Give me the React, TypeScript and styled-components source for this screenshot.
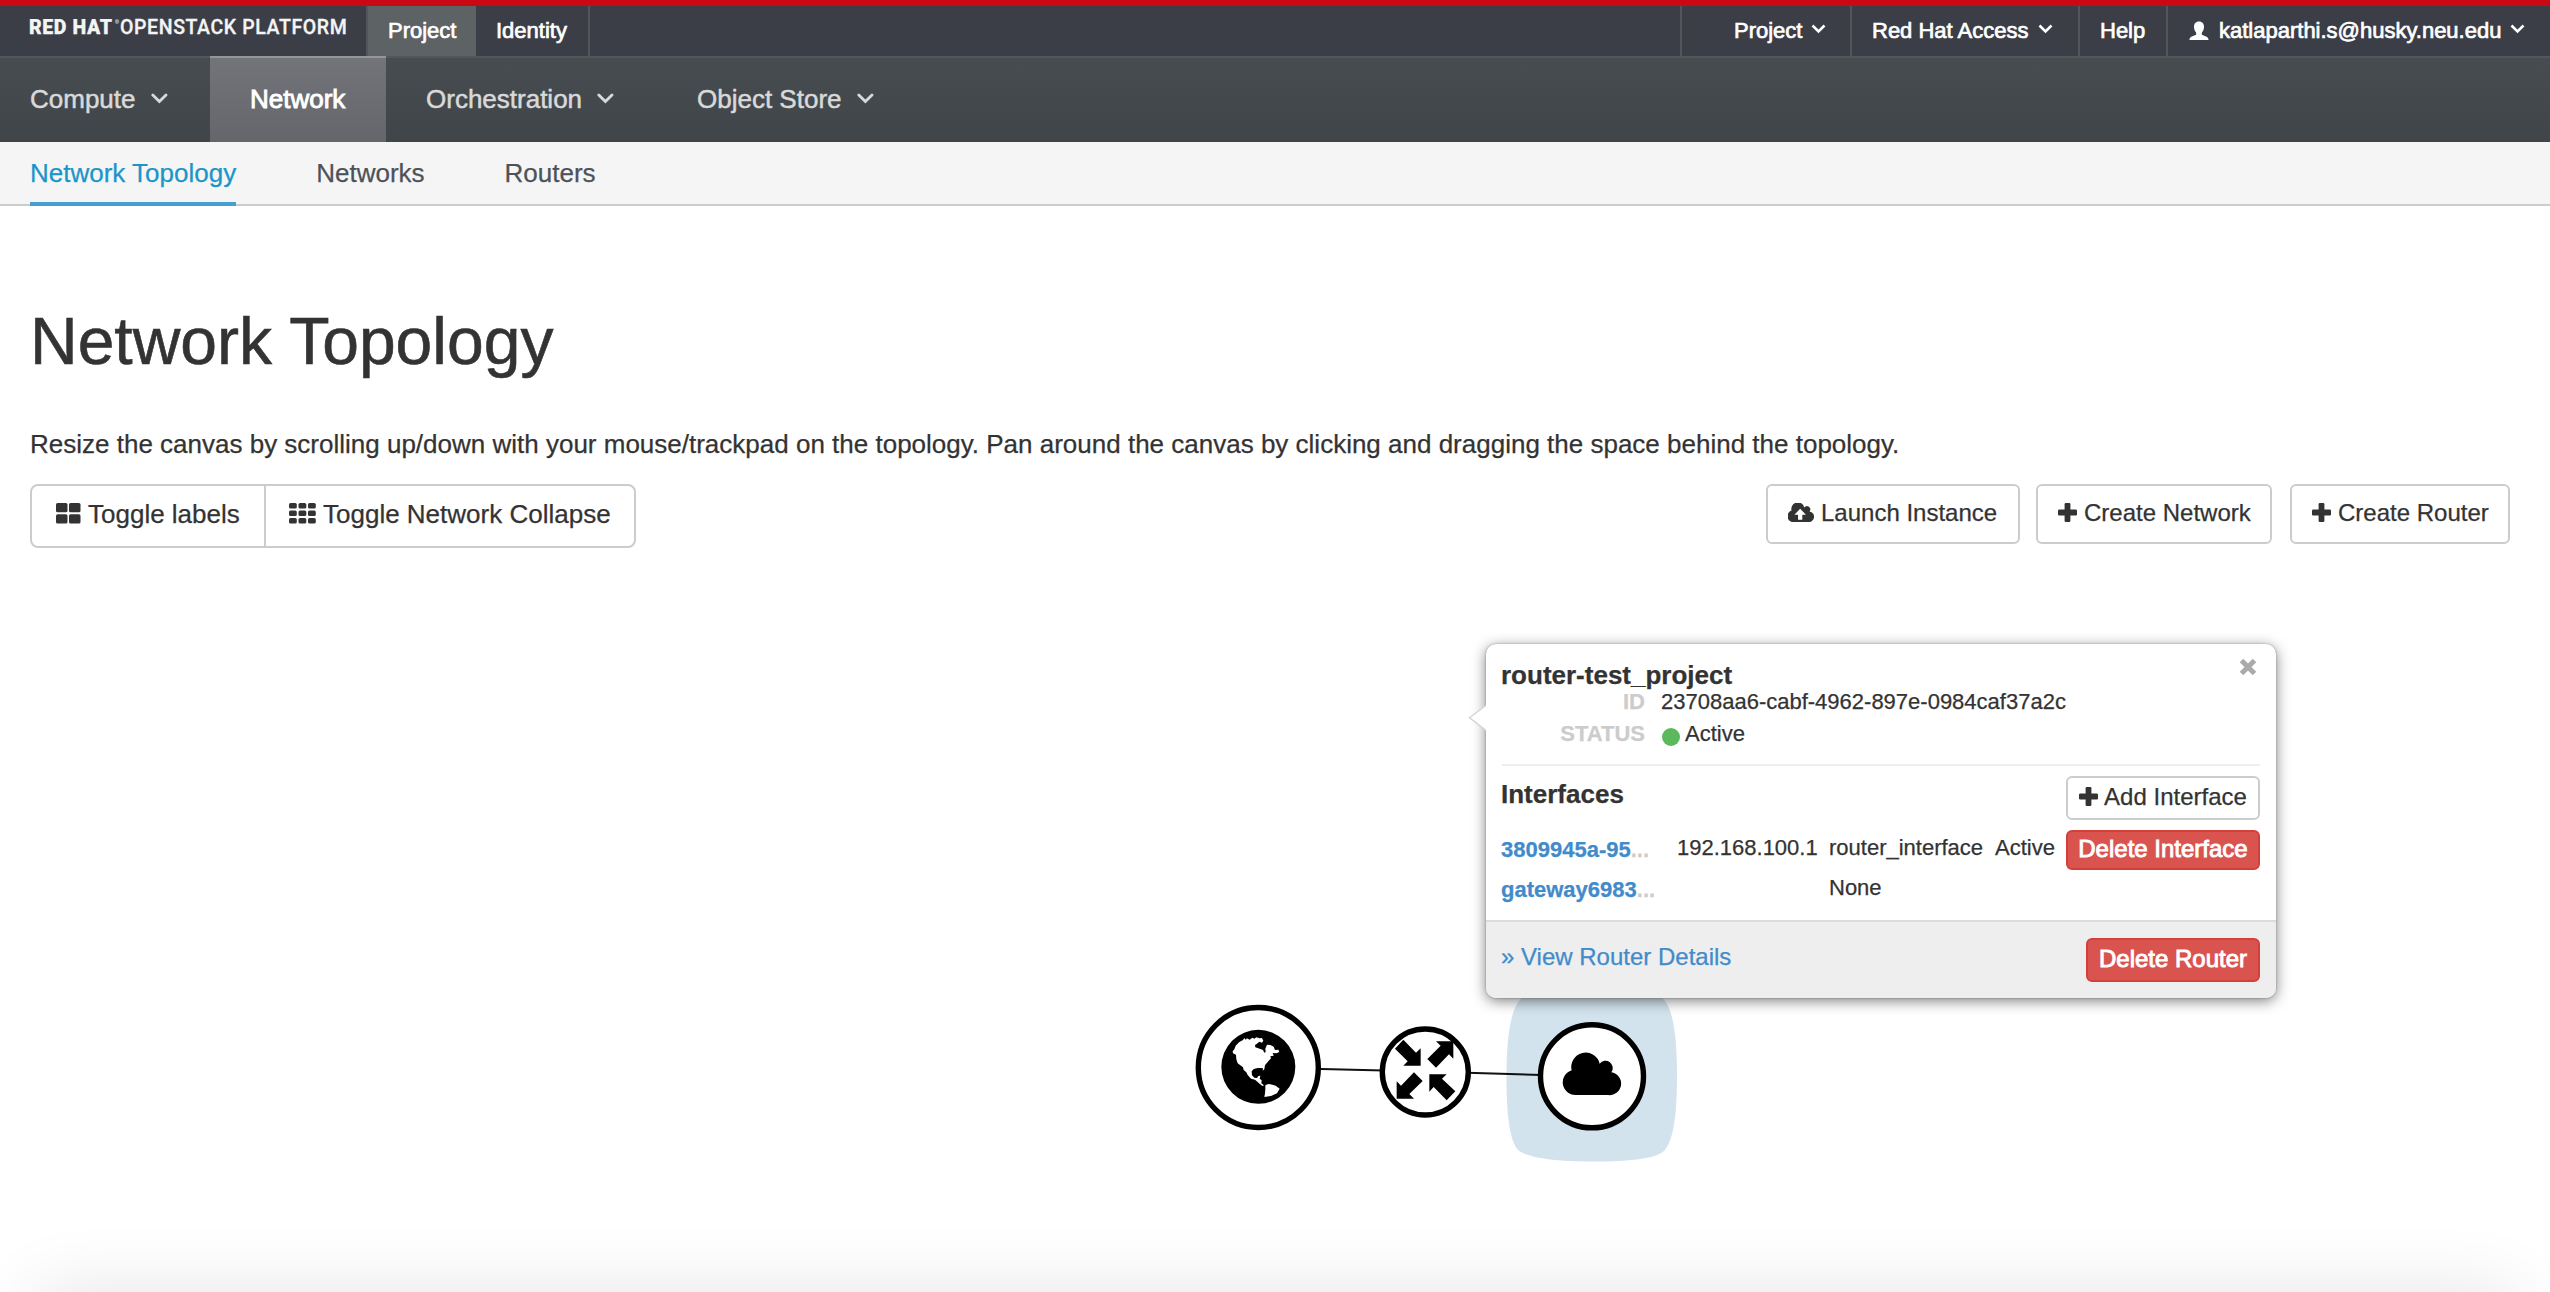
import React from "react";
import styled, { createGlobalStyle, css } from "styled-components";

const GlobalStyle = createGlobalStyle`
  *, *::before, *::after { box-sizing: border-box; }
  body {
    margin: 0;
    background: #fff;
    color: #333;
    font-family: "Liberation Sans", Arial, Helvetica, sans-serif;
    -webkit-text-stroke: 0.25px currentColor;
    overflow: hidden;
  }
`;

const Page = styled.div`
  position: relative;
  display: flex;
  flex-direction: column;
  height: 1292px;
  overflow: hidden;
`;

/* ---------- top bar ---------- */

const TopBar = styled.header`
  display: flex;
  flex: none;
  height: 56px;
  border-top: 6px solid #c90813;
  background: #3b3e46;
`;

const Brand = styled.div`
  display: flex;
  width: 366px;
  padding-left: 29px;
  color: #f4f4f4;
  font-family: Roboto, "Liberation Sans", sans-serif;
  font-size: 19.5px;
  line-height: 43px;
  white-space: nowrap;
`;

const BrandStrong = styled.span`
  width: 86px;
  font-weight: 900;
  letter-spacing: 0.6px;
`;

const BrandMark = styled.span`
  width: 5px;
  font-size: 5px;
  line-height: 32px;
  opacity: 0.6;
`;

const BrandProduct = styled.span`
  font-weight: 500;
  letter-spacing: 0.6px;
  -webkit-text-stroke: 0.3px currentColor;
`;

const whiteSmooth = css`
  color: #fff;
  -webkit-text-stroke: 0.7px #fff;
`;

const Switcher = styled.nav`
  display: flex;
  width: 224px;
  border-left: 2px solid #53565b;
  border-right: 2px solid #53565b;
`;

const SwitcherTab = styled.a<{ $active?: boolean }>`
  ${whiteSmooth}
  flex: none;
  width: ${(p) => (p.$active ? 108 : 112)}px;
  padding-left: 20px;
  background: ${(p) => (p.$active ? "#5d6264" : "transparent")};
  font-size: 22px;
  line-height: 49px;
`;

const UserMenu = styled.div`
  display: flex;
  margin-left: auto;
`;

const UserMenuItem = styled.a<{ $width: number; $indent: number }>`
  ${whiteSmooth}
  display: flex;
  width: ${(p) => p.$width}px;
  padding-left: ${(p) => p.$indent}px;
  border-left: 2px solid #53565b;
  font-size: 22px;
  line-height: 49px;
  white-space: nowrap;
`;

const SmallChevron = styled.svg`
  flex: none;
  width: 15px;
  height: 10px;
  margin: 18px 0 0 9px;
`;

const UserGlyph = styled.svg`
  flex: none;
  width: 20px;
  height: 20px;
  margin: 15px 10px 0 0;
`;

/* ---------- primary navigation ---------- */

const NavBar = styled.nav`
  display: flex;
  flex: none;
  height: 86px;
  border-top: 2px solid #53565b;
  background: linear-gradient(#474c50, #404549);
`;

const NavItem = styled.a<{ $active?: boolean; $width: number; $indent?: number }>`
  display: flex;
  width: ${(p) => p.$width}px;
  height: 86px;
  margin-top: -2px;
  padding-left: ${(p) => p.$indent ?? 40}px;
  border-top: 2px solid ${(p) => (p.$active ? "#94969a" : "transparent")};
  color: #d9d9d9;
  font-size: 26px;
  line-height: 82px;
  white-space: nowrap;
  -webkit-text-stroke: 0.5px #d9d9d9;
  ${(p) =>
    p.$active &&
    css`
      background: linear-gradient(#727479, #64666b);
      color: #fff;
      -webkit-text-stroke: 0.9px #fff;
    `}
`;

const NavChevron = styled.svg`
  flex: none;
  width: 17px;
  height: 12px;
  margin: 35px 0 0 15px;
`;

const SubNav = styled.nav`
  display: flex;
  flex: none;
  gap: 80px;
  height: 64px;
  padding-left: 30px;
  border-bottom: 2px solid #ccc;
  background: #f5f5f5;
`;

const SubNavLink = styled.a<{ $active?: boolean }>`
  height: 64px;
  color: ${(p) => (p.$active ? "#1b95c9" : "#4d5258")};
  border-bottom: 4px solid ${(p) => (p.$active ? "#459fd4" : "transparent")};
  font-size: 26px;
  line-height: 62px;
`;

/* ---------- page body ---------- */

const Intro = styled.section`
  flex: none;
  padding: 99px 40px 0 30px;
`;

const Title = styled.h1`
  margin: 0;
  font-size: 66px;
  font-weight: 400;
  line-height: 72px;
  -webkit-text-stroke: 0.6px currentColor;
`;

const Description = styled.p`
  margin: 50px 0 0;
  font-size: 26px;
  line-height: 35px;
  white-space: nowrap;
`;

const Toolbar = styled.div`
  display: flex;
  justify-content: space-between;
  align-items: flex-start;
  height: 64px;
  margin-top: 22px;
`;

const ToggleGroup = styled.div`
  display: flex;
  height: 64px;
  border: 2px solid #ccc;
  border-radius: 8px;
`;

const Toggle = styled.button<{ $width: number }>`
  display: flex;
  width: ${(p) => p.$width}px;
  padding: 0 0 0 24px;
  border: 0;
  background: none;
  color: #333;
  font: 26px/57px "Liberation Sans", Arial, sans-serif;
  -webkit-text-stroke: 0.25px currentColor;
  white-space: nowrap;
  & + & {
    padding-left: 23px;
    border-left: 2px solid #ccc;
  }
`;

const Actions = styled.div`
  display: flex;
`;

const ActionButton = styled.button<{ $width: number; $gap?: number }>`
  display: flex;
  width: ${(p) => p.$width}px;
  height: 60px;
  margin-left: ${(p) => p.$gap ?? 0}px;
  padding: 0 0 0 20px;
  border: 2px solid #ccc;
  border-radius: 6px;
  background: #fff;
  color: #333;
  font: 24px/54px "Liberation Sans", Arial, sans-serif;
  -webkit-text-stroke: 0.25px currentColor;
  white-space: nowrap;
`;

const Glyph = styled.svg<{ $top: number; $gap: number }>`
  flex: none;
  margin: ${(p) => p.$top}px ${(p) => p.$gap}px 0 0;
  fill: #333;
`;

/* ---------- topology canvas ---------- */

const Canvas = styled.main`
  position: relative;
  flex: 1;
`;

const Graph = styled.svg`
  display: block;
  width: 2550px;
  height: 744px;
`;

const Popover = styled.aside`
  position: absolute;
  left: 1486px;
  top: 96px;
  width: 790px;
  height: 354px;
  border-radius: 10px;
  background: #fff;
  box-shadow: 0 0 2px rgba(0, 0, 0, 0.35), 0 3px 14px rgba(0, 0, 0, 0.5);
`;

const PopoverArrow = styled.svg`
  position: absolute;
  left: -18px;
  top: 58px;
  width: 20px;
  height: 32px;
`;

const CloseButton = styled.svg`
  position: absolute;
  right: 19px;
  top: 14px;
  width: 18px;
  height: 18px;
`;

const PopoverBody = styled.div`
  height: 276px;
  padding: 20px 16px 0;
`;

const DeviceName = styled.h3`
  margin: 0 0 0 -1px;
  font-size: 26px;
  line-height: 22px;
`;

const Facts = styled.dl`
  display: grid;
  grid-template-columns: 143px 1fr;
  column-gap: 16px;
  margin: 0;
  padding-bottom: 14px;
  border-bottom: 2px solid #eee;
  font-size: 22px;
  line-height: 32px;
`;

const FactLabel = styled.dt`
  color: #ccc;
  font-weight: 700;
  text-align: right;
`;

const FactValue = styled.dd`
  display: flex;
  margin: 0;
`;

const StatusDot = styled.span`
  width: 18px;
  height: 18px;
  margin: 10px 5px 0 1px;
  border-radius: 50%;
  background: #5cb85c;
`;

const SectionHead = styled.div`
  display: flex;
  justify-content: space-between;
  height: 64px;
  padding-top: 10px;
`;

const SectionTitle = styled.h4`
  margin: 0 0 0 -1px;
  font-size: 26px;
  line-height: 37px;
`;

const SmallButton = styled.button<{ $danger?: boolean; $width: number; $height: number }>`
  display: flex;
  justify-content: center;
  width: ${(p) => p.$width}px;
  height: ${(p) => p.$height}px;
  padding: 0;
  border: 2px solid #ccc;
  border-radius: 6px;
  background: #fff;
  color: #333;
  font: 24px "Liberation Sans", Arial, sans-serif;
  line-height: ${(p) => p.$height - 6}px;
  white-space: nowrap;
  -webkit-text-stroke: 0.25px currentColor;
  ${(p) =>
    p.$danger &&
    css`
      border-color: #d43f3a;
      background: #d9534f;
      color: #fff;
      -webkit-text-stroke: 0.9px #fff;
    `}
`;

const PortRow = styled.div`
  display: grid;
  grid-template-columns: 175px 152px 166px 71px 194px;
  height: 40px;
  font-size: 22px;
  line-height: 36px;
  white-space: nowrap;
`;

const PortName = styled.span`
  margin-left: -1px;
  color: #ccc;
  font-weight: 700;
  line-height: 40px;
`;

const PortLink = styled.a`
  color: #428bca;
`;

const PopoverFooter = styled.footer`
  display: flex;
  justify-content: space-between;
  height: 78px;
  padding: 16px 16px 0;
  border-top: 2px solid #dcdcdc;
  border-radius: 0 0 10px 10px;
  background: #eee;
`;

const DetailsLink = styled.a`
  margin-left: -1px;
  color: #428bca;
  font-size: 24px;
  line-height: 38px;
`;

const WindowShade = styled.div`
  position: absolute;
  left: 36px;
  right: 36px;
  top: 1292px;
  height: 200px;
  box-shadow: 0 0 72px rgba(0, 0, 0, 0.11);
`;

const Chevron = ({ small }: { small?: boolean }) =>
  small ? (
    <SmallChevron viewBox="0 0 15 10">
      <path d="M1.5 1.5 7.5 7.5 13.5 1.5" fill="none" stroke="#fff" strokeWidth="2.6" />
    </SmallChevron>
  ) : (
    <NavChevron viewBox="0 0 17 12">
      <path d="M1.8 2 8.4 8.6 15 2" fill="none" stroke="#d9d9d9" strokeWidth="2.8" strokeLinecap="round" />
    </NavChevron>
  );

const PlusGlyph = ({ top, gap }: { top: number; gap: number }) => (
  <Glyph $top={top} $gap={gap} width="19" height="19" viewBox="0 0 19 19">
    <rect x="6.6" y="0" width="5.8" height="19" rx="1.2" />
    <rect x="0" y="6.6" width="19" height="5.8" rx="1.2" />
  </Glyph>
);

const TileGlyph = ({ xs, w, ys, h, width }: { xs: number[]; w: number; ys: number[]; h: number; width: number }) => (
  <Glyph $top={17} $gap={7} width={width} height="21" viewBox={`0 0 ${width} 21`}>
    {ys.map((y) => xs.map((x) => <rect key={`${x}-${y}`} x={x} y={y} width={w} height={h} rx="1.6" />))}
  </Glyph>
);

const CLOUD = "M39 123A38 38 0 0 1 23 49A43 43 0 0 1 107 29A21 21 0 0 1 142 55A34 34 0 0 1 132 123Z";

const ports = [
  { name: "3809945a-95", ip: "192.168.100.1", kind: "router_interface", state: "Active", removable: true },
  { name: "gateway6983", ip: "", kind: "None", state: "", removable: false },
];

const RouterPopover = () => (
  <Popover>
    <PopoverArrow viewBox="0 0 20 32">
      <path d="M20 2 1.5 15.8 20 30" fill="#fff" stroke="#d4d4d4" strokeWidth="1.4" />
      <rect x="18" y="0" width="2" height="32" fill="#fff" />
    </PopoverArrow>
    <CloseButton viewBox="0 0 18 18">
      <path d="M2.5 2.5 15.5 15.5M15.5 2.5 2.5 15.5" stroke="#aaa" strokeWidth="5" />
    </CloseButton>
    <PopoverBody>
      <DeviceName>router-test_project</DeviceName>
      <Facts>
        <FactLabel>ID</FactLabel>
        <FactValue>23708aa6-cabf-4962-897e-0984caf37a2c</FactValue>
        <FactLabel>STATUS</FactLabel>
        <FactValue>
          <StatusDot />
          Active
        </FactValue>
      </Facts>
      <SectionHead>
        <SectionTitle>Interfaces</SectionTitle>
        <SmallButton $width={194} $height={44}>
          <PlusGlyph top={9} gap={6} />
          Add Interface
        </SmallButton>
      </SectionHead>
      {ports.map((p) => (
        <PortRow key={p.name}>
          <PortName>
            <PortLink>{p.name}</PortLink>...
          </PortName>
          <span>{p.ip}</span>
          <span>{p.kind}</span>
          <span>{p.state}</span>
          {p.removable && (
            <SmallButton $danger $width={194} $height={40}>
              Delete Interface
            </SmallButton>
          )}
        </PortRow>
      ))}
    </PopoverBody>
    <PopoverFooter>
      <DetailsLink>» View Router Details</DetailsLink>
      <SmallButton $danger $width={174} $height={44}>
        Delete Router
      </SmallButton>
    </PopoverFooter>
  </Popover>
);

const TopologyGraph = () => (
  <Graph viewBox="0 548 2550 744">
    <path
      d="M1592 990C1630 990 1650 991 1661 997C1674 1006 1677 1040 1677 1076C1677 1112 1674 1140 1664 1151C1655 1159 1630 1161.5 1592 1161.5C1554 1161.5 1530 1158 1519 1151C1509 1142 1506.500 1112 1506.500 1076C1506.500 1040 1510 1006 1523 997C1534 991 1554 990 1592 990Z"
      fill="#d3e3ed"
    />
    <path d="M1258 1067.500 1425 1071.500 1592 1076.500" fill="none" stroke="#111" strokeWidth="2" />
    <circle cx="1258.300" cy="1067.500" r="60" fill="#fff" stroke="#000" strokeWidth="5.4" />
    <circle cx="1425.300" cy="1072" r="43" fill="#fff" stroke="#000" strokeWidth="5.4" />
    <circle cx="1592" cy="1076.300" r="51.500" fill="#fff" stroke="#000" strokeWidth="5.4" />
    <g transform="translate(1215 1024) scale(.33333)">
      <circle cx="130" cy="128.500" r="111" />
      <path
        fill="#fff"
        d="M53 82L58 76 62 65 72 55 84 48 88 42 92 47 96 43 104 47 112 41 118 44 124 40 134 43 141 42 145 50 141 56 133 53 125 60 120 63 121 70 134 74 144 78 148 86 152 84 151 74 156 62 166 63 176 68 180 78 190 77 193 84 184 88 173 87 176 95 166 97 168 103 156 116 150 124 148 136 143 140 144 133 137 132 128 132 116 135 110 142 111 154 118 161 126 162 130 156 136 155 134 165 140 168 139 178 147 184 142 186 132 178 120 167 108 164 98 153 94 145 86 138 84 130 76 124 68 118 64 106 63 92 54 88Z"
      />
      <path fill="#fff" d="M151 184L160 180 172 182 182 185 194 194 186 208 168 216 148 219 150 208 151 196Z" />
    </g>
    <g transform="translate(1180 980) scale(.33333)">
      <path d="M670 179L708 218 722 205V257H670L683 244 645 206Z" />
      <path d="M768 184H820V236L807 223 768 263 742 237 782 197Z" />
      <path d="M650 356V304L663 317 702 277 728 303 688 342 702 356Z" />
      <path d="M748 283H800L786 296 826 334 800 361 761 321 748 335Z" />
    </g>
    <g transform="translate(1564 1054) scale(.33333)">
      <path d={CLOUD} />
    </g>
  </Graph>
);

export default function App() {
  return (
    <>
      <GlobalStyle />
      <Page>
        <TopBar>
          <Brand>
            <BrandStrong>RED HAT</BrandStrong>
            <BrandMark>®</BrandMark>
            <BrandProduct>OPENSTACK PLATFORM</BrandProduct>
          </Brand>
          <Switcher>
            <SwitcherTab $active>Project</SwitcherTab>
            <SwitcherTab>Identity</SwitcherTab>
          </Switcher>
          <UserMenu>
            <UserMenuItem $width={170} $indent={52}>
              Project
              <Chevron small />
            </UserMenuItem>
            <UserMenuItem $width={228} $indent={20}>
              Red Hat Access
              <Chevron small />
            </UserMenuItem>
            <UserMenuItem $width={88} $indent={20}>
              Help
            </UserMenuItem>
            <UserMenuItem $width={384} $indent={21}>
              <UserGlyph viewBox="0 0 20 20">
                <path
                  fill="#fff"
                  d="M10 .5C13.400.5 15 2.800 15 5.800C15 8.500 14 10.500 12.800 11.700V13.600C13.500 14.800 19.600 15.200 19.600 19H.4C.4 15.200 6.500 14.800 7.200 13.600V11.700C6 10.500 5 8.500 5 5.800C5 2.800 6.600.5 10 .5Z"
                />
              </UserGlyph>
              katlaparthi.s@husky.neu.edu
              <Chevron small />
            </UserMenuItem>
          </UserMenu>
        </TopBar>
        <NavBar>
          <NavItem $width={210} $indent={30}>
            Compute
            <Chevron />
          </NavItem>
          <NavItem $active $width={176}>
            Network
          </NavItem>
          <NavItem $width={271}>
            Orchestration
            <Chevron />
          </NavItem>
          <NavItem $width={270}>
            Object Store
            <Chevron />
          </NavItem>
        </NavBar>
        <SubNav>
          <SubNavLink $active>Network Topology</SubNavLink>
          <SubNavLink>Networks</SubNavLink>
          <SubNavLink>Routers</SubNavLink>
        </SubNav>
        <Intro>
          <Title>Network Topology</Title>
          <Description>
            Resize the canvas by scrolling up/down with your mouse/trackpad on the topology. Pan around the canvas by
            clicking and dragging the space behind the topology.
          </Description>
          <Toolbar>
            <ToggleGroup>
              <Toggle $width={232}>
                <TileGlyph xs={[0, 13]} w={11.5} ys={[0, 11.3]} h={9.3} width={25} />
                Toggle labels
              </Toggle>
              <Toggle $width={370}>
                <TileGlyph xs={[0, 9.5, 19]} w={7.8} ys={[0, 7.5, 15]} h={5.6} width={27} />
                Toggle Network Collapse
              </Toggle>
            </ToggleGroup>
            <Actions>
              <ActionButton $width={254}>
                <Glyph $top={17} $gap={7} width="26" height="19" viewBox="0 0 171 123" preserveAspectRatio="none">
                  <path d={CLOUD} />
                  <path fill="#fff" d="M80 38L118 76H94V108H66V76H42Z" />
                </Glyph>
                Launch Instance
              </ActionButton>
              <ActionButton $width={236} $gap={16}>
                <PlusGlyph top={17} gap={7} />
                Create Network
              </ActionButton>
              <ActionButton $width={220} $gap={18}>
                <PlusGlyph top={17} gap={7} />
                Create Router
              </ActionButton>
            </Actions>
          </Toolbar>
        </Intro>
        <Canvas>
          <TopologyGraph />
          <RouterPopover />
        </Canvas>
        <WindowShade />
      </Page>
    </>
  );
}
